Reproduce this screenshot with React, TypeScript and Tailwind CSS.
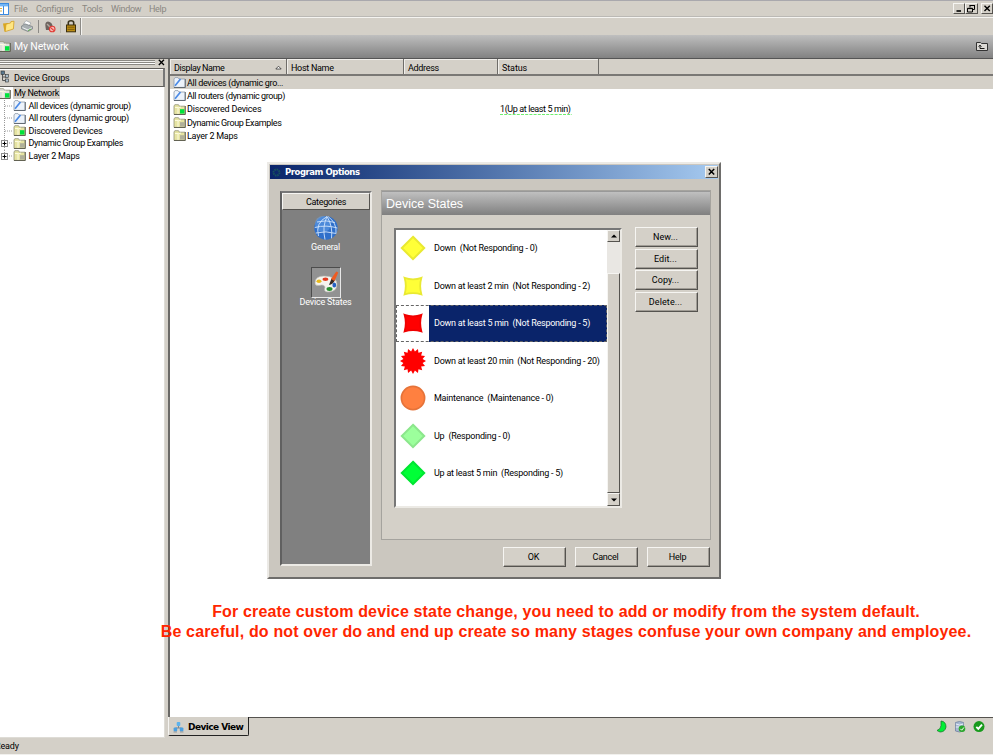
import React from 'react';

const raised = 'border border-t-[#f6f5f2] border-l-[#f6f5f2] border-r-[#55534f] border-b-[#55534f]';

function SmartFolder() {
  return (
    <svg className="block shrink-0" width="13" height="11" viewBox="0 0 13 11">
      <path d="M1 2V10.4H12V2H6L5 .6H2Z" fill="#edf3fb" stroke="#8d99a8" strokeWidth=".8" />
      <path d="M12.3 2V10.5H1" fill="none" stroke="#5a626b" strokeWidth=".9" />
      <path d="M2 8.8L7.5 2" stroke="#4a8ae6" strokeWidth="1.7" />
    </svg>
  );
}

function Folder({ dot, pale }: { dot: string; pale?: boolean }) {
  return (
    <svg className="block shrink-0" width="13" height="11" viewBox="0 0 13 11">
      <path d="M1 2V10.4H12V2.2H6.5L5.5 .7H1.8Z" fill={pale ? '#dfe0dc' : '#e6e4a2'} stroke="#93937a" strokeWidth=".8" />
      <path d="M2 3.5H5V10M5 4L8 3" stroke="#fffde2" strokeWidth=".9" fill="none" />
      <path d="M12.3 2V10.5H1" fill="none" stroke="#5a5a4c" strokeWidth=".9" />
      <rect x="7" y="5.2" width="4.4" height="4.4" fill={dot} />
    </svg>
  );
}

function TreeRow({ label, icon, plus, last }: { label: React.ReactNode; icon: React.ReactNode; plus?: boolean; last?: boolean }) {
  return (
    <div className="flex h-[12.5px] items-center">
      <svg className="block shrink-0" width="13" height="12.5" viewBox="0 0 13 12.5">
        <path d={last ? 'M4.5 0V6' : 'M4.5 0V12.5'} stroke="#999" strokeDasharray="1 1" />
        <path d="M5 6H12" stroke="#999" strokeDasharray="1 1" />
        {plus && <rect x="1.5" y="3.5" width="6" height="6" fill="#fff" stroke="#8c8c8c" />}
        {plus && <path d="M2.5 6.5H6.5M4.5 4.5V8.5" stroke="#000" />}
      </svg>
      {icon}
      <span className="ml-[2.5px] whitespace-nowrap">{label}</span>
    </div>
  );
}

function Btn({ children }: { children: React.ReactNode }) {
  return (
    <div className={`flex h-[20px] w-[63px] items-center justify-center bg-[#d4d0c8] pr-[2px] shadow-[inset_-1px_-1px_0_#a09c95] ${raised}`}>
      {children}
    </div>
  );
}

function Diamond({ fill, edge }: { fill: string; edge: string }) {
  return <path d="M13 1.8L24.2 13L13 24.2L1.8 13Z" fill={fill} stroke={edge} strokeWidth="2" />;
}

function Pinched({ fill, edge }: { fill: string; edge: string }) {
  return <path d="M4.6 4.8Q13 7.8 21.4 4.8Q19 13 21.4 21.4Q13 18.8 4.6 21.4Q7 13 4.6 4.8Z" fill={fill} stroke={edge} strokeWidth="1.8" />;
}

const burst = Array.from({ length: 32 }, (_, i) => {
  const r = i % 2 ? 9.8 : 13;
  const a = (i * Math.PI) / 16;
  return `${(13 + r * Math.sin(a)).toFixed(2)},${(13 - r * Math.cos(a)).toFixed(2)}`;
}).join(' ');

const states = [
  { label: 'Down\u00a0 (Not Responding - 0)', shape: <Diamond fill="#ffff37" edge="#e9e932" /> },
  { label: 'Down at least 2 min\u00a0 (Not Responding - 2)', shape: <Pinched fill="#ffff37" edge="#e9e932" /> },
  { label: 'Down at least 5 min\u00a0 (Not Responding - 5)', shape: <Pinched fill="#ff0000" edge="#f00000" />, sel: true },
  { label: 'Down at least 20 min\u00a0 (Not Responding - 20)', shape: <polygon points={burst} fill="#ff0000" /> },
  { label: 'Maintenance\u00a0 (Maintenance - 0)', shape: <circle cx="13" cy="13" r="11.6" fill="#ff8040" stroke="#e67339" strokeWidth="1.7" /> },
  { label: 'Up\u00a0 (Responding - 0)', shape: <Diamond fill="#9cff9c" edge="#8ce68c" /> },
  { label: 'Up at least 5 min\u00a0 (Responding - 5)', shape: <Diamond fill="#00ff37" edge="#00e632" /> },
];

function MenuBar() {
  return (
    <div className="flex h-[17px] shrink-0 items-center border-t border-b border-t-[#a9a8ad] border-b-[#bbb9b5] text-[#8a8781]">
      <svg className="block" width="9" height="12" viewBox="0 0 9 12">
        <rect x="-3" y=".5" width="11.5" height="11" fill="#fff" stroke="#3c8be0" />
        <path d="M-1 2.2H8" stroke="#72b5f5" strokeWidth="2.4" />
        <path d="M3.5 3V11" stroke="#3c8be0" />
        <path d="M0 5.5H2M0 8H2" stroke="#e0b040" />
      </svg>
      <span className="ml-[5px] w-[22px]">File</span>
      <span className="w-[46px] tracking-[-0.2px]">Configure</span>
      <span className="w-[29px] tracking-[-0.3px]">Tools</span>
      <span className="w-[38px] tracking-[-0.3px]">Window</span>
      <span className="tracking-[-0.3px]">Help</span>
      <div className="ml-auto flex text-black">
        <div className={`h-[11px] w-[12px] bg-[#d4d0c8] ${raised}`}>
          <svg width="10" height="9" viewBox="0 0 10 9" className="block"><path d="M2.5 7H7" stroke="#000" strokeWidth="1.6" /></svg>
        </div>
        <div className={`mr-[3px] h-[11px] w-[13px] bg-[#d4d0c8] ${raised}`}>
          <svg width="10" height="9" viewBox="0 0 10 9" className="block"><path d="M4 3.5V1.5H8.5V5.5H7M3.5 1.5H9M1.5 4.3H6.5V8H1.5ZM1.5 4.6H6.5" stroke="#000" fill="none" /></svg>
        </div>
        <div className={`h-[11px] w-[12px] bg-[#d4d0c8] ${raised}`}>
          <svg width="10" height="9" viewBox="0 0 10 9" className="block"><path d="M2.5 1.8L7.8 7M7.8 1.8L2.5 7" stroke="#000" strokeWidth="1.4" /></svg>
        </div>
      </div>
    </div>
  );
}

function ToolBar() {
  return (
    <div className="flex h-[18px] shrink-0 items-center border-t border-t-[#f5f4f1]">
      <svg className="block" width="84" height="17" viewBox="0 0 84 17">
        <path d="M3 5.5L8 5V11L4.5 13.8Z" fill="#d9a61e" />
        <path d="M6 6.2L10.5 5L11 3.6L14 3.2L13.4 11L5.2 13.6Z" fill="#ffe682" stroke="#d3a024" strokeWidth=".8" />
        <path d="M23.5 6L26 2.6L31 5L29 7.6Z" fill="#fff" stroke="#8a9298" strokeWidth=".6" />
        <path d="M21.5 8L25 5.8L32.5 8.6V11L28 13.6L21.5 10.8Z" fill="#a8aeb1" stroke="#6f777b" strokeWidth=".6" />
        <path d="M22.5 9.6L28 12L31.5 9.8" stroke="#eef1f2" fill="none" />
        <path d="M28 12.6L31 11" stroke="#62b04c" />
        <path d="M38.5 2V15" stroke="#8c8a86" />
        <path d="M45.5 9Q44.5 4 48 3.6Q51.5 4 52.5 7.4L53 12L46 12Z" fill="#6d645f" />
        <path d="M47 6L50 9" stroke="#b5a9a0" strokeWidth="1.4" />
        <circle cx="52.2" cy="11" r="2.8" fill="#f4b9b5" stroke="#e23c35" strokeWidth="1.1" />
        <path d="M50.4 9.4L54 12.6" stroke="#e23c35" strokeWidth="1.1" />
        <path d="M60.5 2V15" stroke="#bcb8b0" />
        <path d="M68.3 8V4.8Q68.3 2.8 71 2.8Q73.7 2.8 73.7 4.8V8" fill="none" stroke="#39331f" strokeWidth="1.6" />
        <rect x="66.5" y="7" width="9" height="6.8" fill="#bd8d13" stroke="#3e300c" />
        <path d="M67.5 9.2H74.5M67.5 11.4H74.5" stroke="#6d510c" strokeWidth=".8" />
        <path d="M80.5 0V17" stroke="#8c8a86" />
        <path d="M81.5 0V17" stroke="#f4f3f0" />
      </svg>
    </div>
  );
}

function Sidebar() {
  return (
    <div className="flex w-[165px] shrink-0 flex-col">
      <div className="flex h-[9px] items-start">
        <div className="mt-[1px] h-[5px] w-[155px] border-t border-b border-[#8b8984] bg-[#f0efec] shadow-[inset_0_-1px_0_#fff]">
          <div className="mt-px h-px bg-[#8b8984]" />
        </div>
        <svg className="ml-[3px] block" width="7" height="7" viewBox="0 0 7 7"><path d="M.8 .8L6 6M6 .8L.8 6" stroke="#000" strokeWidth="1.3" /></svg>
      </div>
      <div className="flex h-[19px] items-center border-y border-r-2 border-y-[#5e5c59] border-r-[#777] shadow-[inset_0_1px_0_#fff]">
        <svg className="mt-[-3px] block" width="10" height="13" viewBox="0 0 10 13">
          <path d="M2.5 4V10.5H6M2.5 7H6" fill="none" stroke="#555" />
          <rect x="1" y="1" width="3.5" height="3.5" fill="#59788e" stroke="#333" strokeWidth=".6" />
          <rect x="5.3" y="4.5" width="3.2" height="3" fill="#a9bdca" stroke="#333" strokeWidth=".6" />
          <rect x="5.3" y="9" width="3.2" height="3" fill="#a9bdca" stroke="#333" strokeWidth=".6" />
        </svg>
        <span className="ml-[4px] tracking-[-0.17px]">Device Groups</span>
      </div>
      <div className="min-h-0 flex-1 border-r border-b border-[#dedcd6] bg-white tracking-[-0.31px]">
        <div className="flex h-[12.5px] items-center">
          <div className="-ml-[2px]"><Folder dot="#00e33c" pale /></div>
          <span className="ml-[2px] bg-[#d4d0c8] px-[1px] leading-[12px]">My Network</span>
        </div>
        <TreeRow label="All devices (dynamic group)" icon={<SmartFolder />} />
        <TreeRow label="All routers (dynamic group)" icon={<SmartFolder />} />
        <TreeRow label={<span className="tracking-[-0.22px]">Discovered Devices</span>} icon={<Folder dot="#00e33c" />} />
        <TreeRow label={<span className="tracking-[-0.37px]">Dynamic Group Examples</span>} icon={<Folder dot="#b0b09a" />} plus />
        <TreeRow label={<span className="tracking-[-0.2px]">Layer 2 Maps</span>} icon={<Folder dot="#b0b09a" />} plus last />
      </div>
    </div>
  );
}

function ListRow({ icon, label, status, sel }: { icon: React.ReactNode; label: React.ReactNode; status?: string; sel?: boolean }) {
  return (
    <div className={`flex h-[13.3px] shrink-0 items-center pl-[3px] ${sel ? 'bg-[#d4d0c8]' : ''}`}>
      {icon}
      <span className="ml-px w-[313px] whitespace-nowrap">{label}</span>
      {status && (
        <span className="relative tracking-[-0.4px]">
          {status}
          <svg className="absolute top-[10px] left-0 block" width="72" height="3" viewBox="0 0 72 3">
            <path d="M0 1.5H72" stroke="#6fee6f" strokeWidth="1.2" strokeDasharray="3 1.2" />
          </svg>
        </span>
      )}
    </div>
  );
}

function DeviceList() {
  const head = 'flex h-full items-center border-r border-[#6f6d69] shadow-[inset_1px_1px_0_#f1efeb] pl-[4px] pt-[2px]';
  return (
    <div className="flex min-w-0 flex-1 flex-col">
      <div className="flex min-h-0 flex-1 flex-col border-b border-l-2 border-b-[#55534f] border-l-[#6a6966] bg-white tracking-[-0.4px]">
        <div className="flex h-[17px] shrink-0 items-center border-b-2 border-[#7a7875] bg-[#d4d0c8] tracking-[-0.3px]">
          <div className={`${head} w-[117px] pr-[4px]`}>
            <span className="tracking-[-0.4px]">Display Name</span>
            <svg className="ml-auto block" width="7" height="5" viewBox="0 0 7 5"><path d="M.8 4L3.5 1.2L6.2 4Z" fill="#fff" stroke="#333" strokeWidth=".8" /></svg>
          </div>
          <div className={`${head} w-[117px]`}>Host Name</div>
          <div className={`${head} w-[94px]`}>Address</div>
          <div className={`${head} w-[101px]`}><span className="tracking-[-0.1px]">Status</span></div>
        </div>
        <ListRow icon={<SmartFolder />} label={<span className="tracking-[-0.32px]">All devices (dynamic gro...</span>} sel />
        <ListRow icon={<SmartFolder />} label="All routers (dynamic group)" />
        <ListRow icon={<Folder dot="#00e33c" />} label={<span className="tracking-[-0.2px]">Discovered Devices</span>} status="1(Up at least 5 min)" />
        <ListRow icon={<Folder dot="#b0b09a" />} label={<span className="tracking-[-0.37px]">Dynamic Group Examples</span>} />
        <ListRow icon={<Folder dot="#b0b09a" />} label={<span className="tracking-[-0.25px]">Layer 2 Maps</span>} />
      </div>
      <div className="flex h-[20px] shrink-0 items-start">
        <div className="-mt-px flex h-[19px] w-[81px] items-center rounded-b-[2px] border-r-[1.5px] border-b-[1.5px] border-l border-[#222] border-l-[#f5f4f1] bg-[#d4d0c8] pt-px pl-[4px]">
          <svg className="block" width="11" height="12" viewBox="0 0 11 12">
            <path d="M5.5 4V7M2.5 9V7H8.5V9" fill="none" stroke="#7b8791" />
            <rect x="3.7" y="1" width="3.6" height="4" rx="1" fill="#5bb2ee" />
            <rect x=".6" y="6.5" width="3.6" height="4" rx="1" fill="#4a9fe0" />
            <rect x="6.8" y="6.5" width="3.6" height="4" rx="1" fill="#4a9fe0" />
            <path d="M.5 11H4M7 11H10.5" stroke="#999" />
          </svg>
          <span className="ml-[4px] font-['DejaVu_Sans',sans-serif] text-[9px] font-bold tracking-[-0.55px] whitespace-nowrap">Device View</span>
        </div>
        <svg className="mt-[2px] mr-[7px] ml-auto block" width="50" height="14" viewBox="0 0 50 14">
          <path d="M5 1Q10 1.5 10 7Q9 12 4 12L1 10.5Q5 9 5 5.5Z" fill="#00ef35" stroke="#1b7c2d" strokeWidth=".8" />
          <path d="M19.5 2.5Q23.5 .5 27.5 2.5V11Q23.5 13 19.5 11Z" fill="#a7b8d3" stroke="#71829e" strokeWidth=".8" />
          <path d="M19.8 4Q23.5 6 27.3 4M19.8 7H27" stroke="#e6eef8" fill="none" />
          <circle cx="26" cy="8.8" r="3.3" fill="#2ba82c" />
          <path d="M24.3 8.8L25.7 10.2L28 7.4" fill="none" stroke="#fff" />
          <circle cx="43" cy="6.6" r="5.5" fill="#189a1d" />
          <path d="M40.3 6.8L42.3 8.8L46 4.7" fill="none" stroke="#fff" strokeWidth="1.9" />
        </svg>
      </div>
    </div>
  );
}

function Categories() {
  return (
    <div className="flex h-[375px] w-[92px] flex-col items-center border-2 border-t-[#777] border-r-[#eceae5] border-b-[#eceae5] border-l-[#606060] bg-[#808080] text-white">
      <div className={`flex h-[17px] w-full shrink-0 items-center justify-center bg-[#d4d0c8] tracking-[-0.33px] text-black ${raised}`}>Categories</div>
      <svg className="mt-[5px] block" width="26" height="26" viewBox="0 0 26 26">
        <circle cx="13" cy="13" r="11.7" fill="#2f6fca" />
        <circle cx="10" cy="9" r="8" fill="#6ba6ea" opacity=".5" />
        <g fill="none" stroke="#cfe3fb" strokeWidth=".9">
          <path d="M4 7Q13 4.5 22 7.5M1.8 12.5Q13 9.5 24.3 13M2.8 18Q13 15.5 23.3 18.5" />
          <path d="M14 1.5Q2 8 5.5 21M14 1.5Q9 12 12 24.5M14 1.5Q20 11 18.5 23.3M15 1.5Q24 8 23 18" />
        </g>
      </svg>
      <span className="mt-px mr-px leading-[11px]">General</span>
      <div className="mt-[14px] border border-t-[#4c4c4c] border-r-[#e8e8e8] border-b-[#e8e8e8] border-l-[#4c4c4c] bg-[#929292]">
        <svg className="block" width="28" height="29" viewBox="0 0 28 29">
          <path d="M3 15Q3 8 12 8Q24 8 25 16Q25 24 16 24Q11 24 13 19Q12 16 7 17.5Q3 18 3 15Z" fill="#f5f3ee" stroke="#b8b8b0" strokeWidth=".6" />
          <ellipse cx="7" cy="13.3" rx="2.5" ry="1.8" fill="#e8b91c" />
          <ellipse cx="13.5" cy="11.2" rx="2.9" ry="1.7" fill="#e33b20" />
          <ellipse cx="17.5" cy="21" rx="3" ry="1.9" fill="#258e2c" />
          <ellipse cx="22.3" cy="17" rx="1.9" ry="2.6" fill="#2561c4" />
          <path d="M17 17L19.5 10.5L23 12Q21 16.5 17 17Z" fill="#3a2b24" />
          <path d="M19 11L24.3 3.5L26.3 4.6L22.5 13Z" fill="#ee5b22" />
        </svg>
      </div>
      <span className="-mt-px mr-px leading-[11px] tracking-[-0.2px]">Device States</span>
    </div>
  );
}

function ScrollBar() {
  return (
    <div className="flex h-full w-[13px] shrink-0 flex-col bg-[#e9e7e3]">
      <div className={`flex h-[12px] items-center justify-center bg-[#d4d0c8] ${raised}`}>
        <svg className="block" width="6" height="4" viewBox="0 0 6 4"><path d="M0 3.5L3 .5L6 3.5Z" /></svg>
      </div>
      <div className={`mt-[31px] h-[220px] bg-[#d4d0c8] ${raised}`} />
      <div className={`flex h-[13px] items-center justify-center bg-[#d4d0c8] ${raised}`}>
        <svg className="block" width="6" height="4" viewBox="0 0 6 4"><path d="M0 .5L3 3.5L6 .5Z" /></svg>
      </div>
    </div>
  );
}

function Dialog() {
  return (
    <div className="absolute top-[162px] left-[267px] h-[417px] w-[454px] border-2 border-t-[#eceae6] border-r-[#6e6d6b] border-b-[#6e6d6b] border-l-[#eceae6] bg-[#cbc7bf] p-px tracking-[-0.24px]">
      <div className="flex h-[14px] items-center bg-linear-to-r from-[#0a246a] to-[#a6caf0] pl-[2px]">
        <svg className="block" width="9" height="9" viewBox="0 0 9 9"><circle cx="4.5" cy="4.5" r="3" fill="none" stroke="#17505d" strokeWidth="2" strokeDasharray="1.6 .7" /></svg>
        <span className="ml-[4px] font-['DejaVu_Sans',sans-serif] text-[8.5px] font-bold tracking-[-0.45px] text-white">Program Options</span>
        <div className={`ml-auto h-[12px] w-[13px] bg-[#d4d0c8] ${raised}`}>
          <svg width="11" height="10" viewBox="0 0 11 10" className="block"><path d="M2.8 2L8.2 7.6M8.2 2L2.8 7.6" stroke="#000" strokeWidth="1.5" /></svg>
        </div>
      </div>
      <div className="mt-[11px] flex pl-[10px]">
        <div className="pt-px"><Categories /></div>
        <div className="ml-[9px]">
          <div className="h-[350px] w-[330px] border border-[#a5a39e] bg-[#d4d0c8]">
            <div className="flex h-[24px] items-center border-t border-[#999] bg-linear-to-b from-[#c0c0c0] to-[#808080] pl-[4px] font-['Liberation_Sans',sans-serif] text-[12.5px] tracking-normal text-white">Device States</div>
            <div className="mt-[13px] flex pl-[12px]">
              <div className="flex h-[280px] w-[228px] border-2 border-t-[#777] border-r-[#eceae5] border-b-[#eceae5] border-l-[#777] bg-white">
                <div className="-mt-[0.5px] min-w-0 flex-1">
                  {states.map((s) => (
                    <div key={s.label} className={`flex h-[37.5px] items-center ${s.sel ? 'outline outline-dashed -outline-offset-1 outline-[#666]' : ''}`}>
                      <svg className="mr-[4px] ml-[4px] block shrink-0" width="26" height="26" viewBox="0 0 26 26">{s.shape}</svg>
                      <div className={`-ml-px flex h-full flex-1 items-center pl-[5px] whitespace-nowrap ${s.sel ? 'bg-[#0a246a] text-white' : ''}`}>{s.label}</div>
                    </div>
                  ))}
                </div>
                <ScrollBar />
              </div>
              <div className="-mt-px ml-[13px] flex flex-col gap-[1.7px] tracking-[0.1px]">
                <Btn>New...</Btn>
                <Btn>Edit...</Btn>
                <Btn>Copy...</Btn>
                <Btn>Delete...</Btn>
              </div>
            </div>
          </div>
          <div className="mt-[7px] mr-px flex justify-end gap-[9px]">
            <Btn>OK</Btn>
            <Btn>Cancel</Btn>
            <Btn>Help</Btn>
          </div>
        </div>
      </div>
    </div>
  );
}

export default function App() {
  return (
    <div className="relative flex h-[755px] w-[993px] flex-col overflow-hidden bg-[#d4d0c8] font-['Roboto',sans-serif] text-[9px] leading-[12px] tracking-[-0.15px] text-black">
      <MenuBar />
      <ToolBar />
      <div className="flex h-[24px] shrink-0 items-center border-b border-[#555] bg-linear-to-b from-[#bfbfbf] to-[#828282]">
        <div className="-ml-[2px]"><Folder dot="#00e33c" pale /></div>
        <span className="ml-[3px] text-[10.5px] text-white">My Network</span>
        <svg className="mr-[5px] ml-auto block" width="12" height="11" viewBox="0 0 12 11">
          <path d="M.5 1.5H4.5L5.5 2.5H11.5V9.5H.5Z" fill="#dcdad6" stroke="#333" />
          <path d="M4 7.5V4.3M2.6 5.6L4 4.2L5.4 5.6M4 7.5H8.5" fill="none" stroke="#000" strokeWidth=".9" />
        </svg>
      </div>
      <div className="flex min-h-0 flex-1">
        <Sidebar />
        <div className="w-[3px] shrink-0" />
        <DeviceList />
      </div>
      <div className="flex h-[17px] shrink-0 items-center border-b border-[#f1f0ed]">
        <span className="-ml-[5px]">Ready</span>
      </div>
      <Dialog />
      <div className="absolute top-[602px] left-[160px] w-[812px] text-center font-['Liberation_Sans',sans-serif] text-[16px] leading-[20px] font-bold tracking-[0.16px] whitespace-nowrap text-[#ff2600]">
        <div>For create custom device state change, you need to add or modify from the system default.</div>
        <div>Be careful, do not over do and end up create so many stages confuse your own company and employee.</div>
      </div>
    </div>
  );
}
